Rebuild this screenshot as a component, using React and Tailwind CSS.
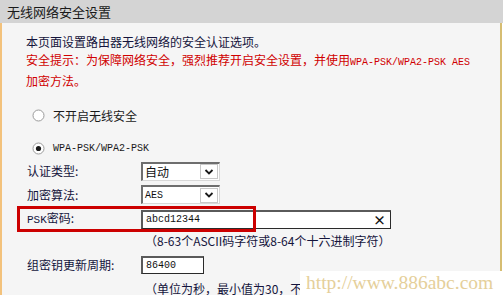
import React from "react";

const Radio = ({ checked }) => (
  <svg width="13" height="13" viewBox="0 0 13 13" className="shrink-0">
    <circle cx="6.5" cy="6.5" r="5.5" fill="#ffffff" stroke="#9a9a9a" strokeWidth="1" />
    {checked && <circle cx="6.5" cy="6.5" r="2.6" fill="#1a1a1a" />}
  </svg>
);

const Chevron = () => (
  <svg width="10" height="8" viewBox="0 0 10 8">
    <path d="M1.5 2 L5 5.5 L8.5 2" fill="none" stroke="#1a1a1a" strokeWidth="1.8" />
  </svg>
);

const Select = ({ children, mono }) => (
  <div className="w-[79px] h-[19px] bg-white border-t-2 border-l-2 border-t-[#6e6e6e] border-l-[#6e6e6e] border-r border-b border-r-[#d8d8d8] border-b-[#d8d8d8] flex items-center justify-between">
    <span
      className={
        mono
          ? "pl-[2px] text-[10px] font-['Liberation_Mono',monospace] text-[#111]"
          : "pl-[2px] text-[12px] text-[#111] leading-none"
      }
    >
      {children}
    </span>
    <div className="w-[18px] h-[15px] mr-[1px] bg-white border border-[#c8c8c8] flex items-center justify-center">
      <Chevron />
    </div>
  </div>
);

export default function App() {
  return (
    <div className="w-[503px] h-[295px] relative overflow-hidden bg-white font-['Noto_Sans_CJK_SC',sans-serif]">
      <div className="h-[23px] bg-[#d4d4d4] flex items-center pl-[7px] text-[13px] text-[#1a1a1a]">
        无线网络安全设置
      </div>
      <div className="h-[272px] mr-[1px] bg-[#f5f5f5] border-l-2 border-l-[#f3c27c] border-r-2 border-r-[#d6bd72] pt-[10px] text-[12px] text-[#14143c]">
        <div className="pl-[24px] leading-[18px]">
          <div className="text-[#14143c]">本页面设置路由器无线网络的安全认证选项。</div>
          <div className="text-[#d00000]">
            安全提示：为保障网络安全，强烈推荐开启安全设置，并使用
            <span className="text-[10px] font-['Liberation_Mono',monospace]">WPA-PSK/WPA2-PSK AES</span>
          </div>
          <div className="text-[#d00000]">加密方法。</div>
        </div>

        <div className="mt-[14px] h-[22px] pl-[30px] flex items-center gap-[8px]">
          <Radio />
          <span className="text-[#1a1a1a] pt-[2px]">不开启无线安全</span>
        </div>
        <div className="mt-[11px] h-[22px] pl-[30px] flex items-center gap-[8px]">
          <Radio checked />
          <span className="text-[10px] text-[#1a1a1a] font-['Liberation_Mono',monospace]">WPA-PSK/WPA2-PSK</span>
        </div>

        <div className="h-[24px] pl-[25px] flex items-center">
          <span className="w-[114px]">认证类型:</span>
          <Select>自动</Select>
        </div>
        <div className="h-[23px] pl-[25px] flex items-center">
          <span className="w-[114px]">加密算法:</span>
          <Select mono>AES</Select>
        </div>

        <div className="relative h-[26px] pl-[25px] flex items-center">
          <span className="w-[114px]">
            <span className="text-[11px] font-['Liberation_Mono',monospace]">PSK</span>密码:
          </span>
          <div className="w-[250px] h-[19px] bg-white border-t-2 border-l-2 border-t-[#5a5a5a] border-l-[#5a5a5a] border-r border-b border-r-[#2a2a2a] border-b-[#2a2a2a] flex items-center justify-between pl-[3px] pr-[4px]">
            <span className="text-[10px] text-[#111] font-['Liberation_Mono',monospace]">abcd12344</span>
            <span className="text-[13px] leading-none text-[#111] font-bold">×</span>
          </div>
          <div className="absolute left-[15px] top-0 w-[239px] h-[26px] border-[3px] border-[#cc0000]" />
        </div>

        <div className="h-[18px] pl-[143px] flex items-center text-[#14143c]">
          （8-63个ASCII码字符或8-64个十六进制字符）
        </div>

        <div className="mt-[2px] h-[25px] pl-[25px] flex items-center">
          <span className="w-[114px]">组密钥更新周期:</span>
          <div className="w-[63px] h-[18px] bg-white border-t-2 border-l-2 border-t-[#5a5a5a] border-l-[#5a5a5a] border-r border-b border-r-[#2a2a2a] border-b-[#2a2a2a] flex items-center pl-[3px]">
            <span className="text-[10px] text-[#111] font-['Liberation_Mono',monospace]">86400</span>
          </div>
        </div>

        <div className="mt-[3px] h-[18px] ml-[143px] w-[155px] overflow-hidden flex items-center whitespace-nowrap text-[#14143c]">
          （单位为秒，最小值为30，不更
        </div>
      </div>

      <div className="absolute left-[300px] top-[271px] w-[203px] h-[24px] bg-white pl-[6px] text-[19.5px] leading-[24px] text-[#e5cf9a] font-['Liberation_Serif',serif] whitespace-nowrap">
        http://www.886abc.com
      </div>
    </div>
  );
}
